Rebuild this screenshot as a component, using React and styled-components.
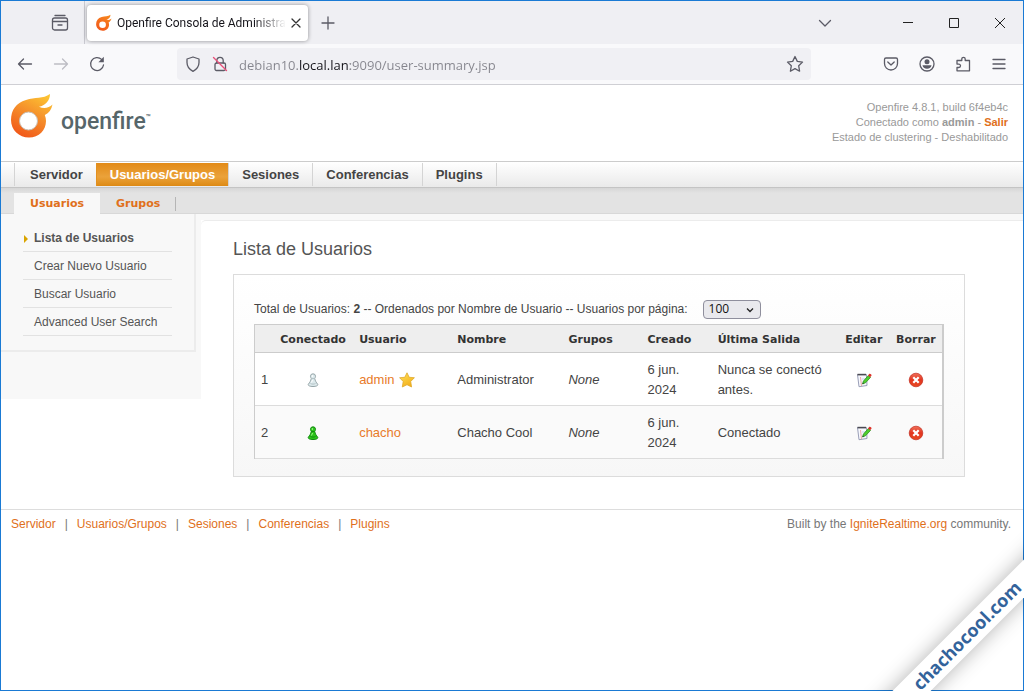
import React from "react";
import styled, { createGlobalStyle } from "styled-components";

const mainTabs = ["Servidor", "Usuarios/Grupos", "Sesiones", "Conferencias", "Plugins"];
const subTabs = ["Usuarios", "Grupos"];
const sideLinks = ["Lista de Usuarios", "Crear Nuevo Usuario", "Buscar Usuario", "Advanced User Search"];
const columns = [
  { title: "", width: 18 },
  { title: "Conectado", width: 80, center: true },
  { title: "Usuario", width: 98 },
  { title: "Nombre", width: 111 },
  { title: "Grupos", width: 79 },
  { title: "Creado", width: 70 },
  { title: "Última Salida", width: 126 },
  { title: "Editar", width: 52, center: true },
  { title: "Borrar", width: 52, center: true },
];
const users = [
  { user: "admin", name: "Administrator", admin: true, online: false, created: "6 jun. 2024", last: "Nunca se conectó antes." },
  { user: "chacho", name: "Chacho Cool", admin: false, online: true, created: "6 jun. 2024", last: "Conectado" },
];

function App() {
  return (
    <Page>
      <GlobalStyle />
      <Window>
        <TabStrip>
          <IconButton aria-label="Firefox View" $w={48}><ViewIcon /></IconButton>
          <StripDivider />
          <Tab>
            <Flame size={17} flat />
            <TabTitle>Openfire Consola de Administra</TabTitle>
            <TabClose aria-label="Cerrar">
              <Line viewBox="0 0 10 10" $size={10}><path d="M1 1l8 8M9 1l-8 8" /></Line>
            </TabClose>
          </Tab>
          <IconButton aria-label="Nueva pestaña" $w={40}>
            <Line viewBox="0 0 14 14" $size={14}><path d="M7 1v12M1 7h12" /></Line>
          </IconButton>
          <Spacer />
          <IconButton aria-label="Listar pestañas" $w={48}>
            <Line viewBox="0 0 14 14" $size={14}><path d="M1.500 4.500L7 10l5.500-5.500" /></Line>
          </IconButton>
          <WindowButtons>
            <IconButton aria-label="Minimizar" $w={46} $dark>
              <Line viewBox="0 0 12 12" $size={12} $thin><path d="M1 5.500h10" /></Line>
            </IconButton>
            <IconButton aria-label="Maximizar" $w={46} $dark>
              <Line viewBox="0 0 12 12" $size={12} $thin><path d="M1.500 1.500h9v9h-9z" /></Line>
            </IconButton>
            <IconButton aria-label="Cerrar ventana" $w={46} $dark>
              <Line viewBox="0 0 12 12" $size={12} $thin><path d="M1 1l10 10M11 1L1 11" /></Line>
            </IconButton>
          </WindowButtons>
        </TabStrip>

        <NavBar>
          <NavGroup>
            <IconButton aria-label="Atrás" $w={36}><ArrowIcon /></IconButton>
            <IconButton aria-label="Adelante" $w={36} disabled><ArrowIcon flip /></IconButton>
            <IconButton aria-label="Recargar" $w={36}><ReloadIcon /></IconButton>
          </NavGroup>
          <UrlBar>
            <ShieldIcon />
            <LockIcon />
            <UrlInput aria-label="Dirección" defaultValue="debian10.local.lan:9090/user-summary.jsp" />
            <IconButton aria-label="Marcador" $w={32}><BookmarkIcon /></IconButton>
          </UrlBar>
          <NavTools>
            <IconButton aria-label="Pocket" $w={36}><PocketIcon /></IconButton>
            <IconButton aria-label="Cuenta" $w={36}><AccountIcon /></IconButton>
            <IconButton aria-label="Extensiones" $w={36}><PuzzleIcon /></IconButton>
            <IconButton aria-label="Menú" $w={36}>
              <Line viewBox="0 0 14 14" $size={14}><path d="M1 2.500h12M1 7h12M1 11.500h12" /></Line>
            </IconButton>
          </NavTools>
        </NavBar>

        <Header>
          <Brand href="#">
            <Flame size={46} />
            <BrandName>openfire<sup>™</sup></BrandName>
          </Brand>
          <Status>
            Openfire 4.8.1, build 6f4eb4c<br />
            Conectado como <b>admin</b> - <a href="#">Salir</a><br />
            Estado de clustering - Deshabilitado
          </Status>
        </Header>

        <MainNav>
          {mainTabs.map((tab) => (
            <MainTab href="#" key={tab} $active={tab === "Usuarios/Grupos"}>{tab}</MainTab>
          ))}
        </MainNav>
        <SubNav>
          {subTabs.map((tab) => (
            <SubTab href="#" key={tab} $active={tab === "Usuarios"}>{tab}</SubTab>
          ))}
        </SubNav>

        <Body>
          <Sidebar>
            <SideBox>
              {sideLinks.map((link, i) => (
                <SideLink href="#" key={link} $active={i === 0}>{link}</SideLink>
              ))}
            </SideBox>
          </Sidebar>
          <Main>
            <Title>Lista de Usuarios</Title>
            <Panel>
              <Summary>
                <label htmlFor="range">
                  Total de Usuarios: <b>2</b> -- Ordenados por Nombre de Usuario -- Usuarios por página:
                </label>
                <SelectWrap>
                  <Select id="range" defaultValue="100">
                    <option>25</option>
                    <option>50</option>
                    <option>100</option>
                  </Select>
                  <Chevron viewBox="0 0 8 8"><path d="M1 2.500l3 3 3-3" /></Chevron>
                </SelectWrap>
              </Summary>
              <Table>
                <colgroup>
                  {columns.map((c) => <col key={c.title} style={{ width: c.width }} />)}
                </colgroup>
                <thead>
                  <tr>
                    {columns.map((c) => <Th key={c.title} $center={c.center}>{c.title}</Th>)}
                  </tr>
                </thead>
                <tbody>
                  {users.map((u, i) => (
                    <Row key={u.user}>
                      <Td>{i + 1}</Td>
                      <Td $center><Pawn online={u.online} /></Td>
                      <Td>
                        <UserCell>
                          <UserLink href="#">{u.user}</UserLink>
                          {u.admin && <StarIcon />}
                        </UserCell>
                      </Td>
                      <Td>{u.name}</Td>
                      <Td><em>None</em></Td>
                      <Td>{u.created}</Td>
                      <Td>{u.last}</Td>
                      <Td $center><IconLink href="#" aria-label={`Editar ${u.user}`}><EditIcon /></IconLink></Td>
                      <Td $center><IconLink href="#" aria-label={`Borrar ${u.user}`}><DeleteIcon /></IconLink></Td>
                    </Row>
                  ))}
                </tbody>
              </Table>
            </Panel>
          </Main>
        </Body>

        <Footer>
          <FooterLinks>
            {mainTabs.map((tab, i) => (
              <React.Fragment key={tab}>
                {i > 0 && <span>|</span>}
                <a href="#">{tab}</a>
              </React.Fragment>
            ))}
          </FooterLinks>
          <div>Built by the <a href="#">IgniteRealtime.org</a> community.</div>
        </Footer>
      </Window>
      <Ribbon>chachocool.com</Ribbon>
    </Page>
  );
}

export default App;

/* icons */

function Flame({ size, flat }) {
  const id = flat ? "flame-s" : "flame-l";
  return (
    <svg width={size} height={size} viewBox="4 4 46 46">
      <defs>
        <linearGradient id={id} x1="0.85" y1="0" x2="0.35" y2="1">
          <stop offset="0" stopColor={flat ? "#f58a1f" : "#fdc733"} />
          <stop offset="0.5" stopColor={flat ? "#f5701c" : "#f58f2b"} />
          <stop offset="1" stopColor="#f15a1a" />
        </linearGradient>
      </defs>
      <path
        fill={`url(#${id})`}
        fillRule="evenodd"
        d="M46 6C39 11 31 9 22 12 12 15 7 22 7 32c0 10 8 17.500 18 17.500S42 42 42 33c0-2-.4-4-1.200-6C45 25 47.500 21.500 48.500 16.500 45 20 40 21 35 18.800c6-1.300 11-5.800 11-12.800zM24.500 24a9 9 0 1 0 .01 18A9 9 0 0 0 24.500 24z"
      />
      {!flat && <circle cx="24.500" cy="33" r="9" fill="none" stroke="#c9bfb4" strokeWidth="1" />}
    </svg>
  );
}

function ViewIcon() {
  return (
    <Line viewBox="0 0 18 18" $size={18}>
      <path d="M4 1.500h10" />
      <rect x="1.500" y="4" width="15" height="12" rx="2" />
      <path d="M1.500 7.500h15M7 11h4" />
    </Line>
  );
}

function ArrowIcon({ flip }) {
  return (
    <Line viewBox="0 0 16 16" $size={16}>
      <path d={flip ? "M1.500 8h13M9.500 3l5 5-5 5" : "M14.500 8h-13M6.500 3l-5 5 5 5"} />
    </Line>
  );
}

function ReloadIcon() {
  return (
    <Line viewBox="0 0 16 16" $size={16}>
      <path d="M12.600 3.400A6.500 6.500 0 1 0 14.500 9" />
      <path d="M14.800 .8v5.400H9.400z" fill="currentColor" stroke="none" />
    </Line>
  );
}

function ShieldIcon() {
  return (
    <Line viewBox="0 0 16 16" $size={16}>
      <path d="M8 1l6 2v3.500c0 4-2.500 7-6 8.800-3.500-1.800-6-4.800-6-8.800V3z" />
    </Line>
  );
}

function LockIcon() {
  return (
    <Line viewBox="0 0 16 16" $size={16}>
      <path d="M4.800 7V4.500a3.200 3.200 0 0 1 6.400 0V7" />
      <rect x="3" y="7" width="10.500" height="7.500" rx="1.500" />
      <path d="M1.500 1.500l13 13" stroke="#e8507a" strokeWidth="1.400" />
    </Line>
  );
}

function BookmarkIcon() {
  return (
    <Line viewBox="0 0 18 18" $size={18}>
      <path d="M9 1.500l2.300 4.900 5.200.7-3.800 3.700.9 5.400L9 13.600l-4.600 2.600.9-5.400L1.500 7.100l5.200-.7z" />
    </Line>
  );
}

function PocketIcon() {
  return (
    <Line viewBox="0 0 16 16" $size={16}>
      <path d="M3 2h10a1.500 1.500 0 0 1 1.500 1.500v4a6.500 6.500 0 0 1-13 0v-4A1.500 1.500 0 0 1 3 2z" />
      <path d="M4.800 6L8 9l3.200-3" />
    </Line>
  );
}

function AccountIcon() {
  return (
    <Line viewBox="0 0 16 16" $size={16}>
      <circle cx="8" cy="8" r="7" />
      <circle cx="8" cy="5.800" r="2.500" fill="currentColor" stroke="none" />
      <path d="M3.500 9.300h9c-.3 2-2 3.500-4.500 3.500s-4.200-1.500-4.500-3.500z" fill="currentColor" stroke="none" />
    </Line>
  );
}

function PuzzleIcon() {
  return (
    <Line viewBox="0 0 16 16" $size={16}>
      <path d="M2 4.500h4.800V3a1.700 1.700 0 0 1 3.400 0v1.500h4.300v10.300H2v-3.300h1.800a1.700 1.700 0 0 0 0-3.400H2z" />
    </Line>
  );
}

function Pawn({ online }) {
  const edge = online ? "#128a10" : "#96a5a8";
  return (
    <svg width="16" height="16" viewBox="0 0 16 16">
      <path
        d="M5.500 4.300a2.500 2.500 0 0 1 5 0c0 1-.4 1.500-.8 2 .5 2.700 1.500 4 3 6 .6 1.500-2 2.200-4.700 2.200s-5.300-.7-4.700-2.200c1.500-2 2.500-3.300 3-6-.4-.5-.8-1-.8-2z"
        fill={online ? "#2cc51b" : "#dce9ec"}
        stroke={edge}
      />
      <path d="M6.500 6.500h3M5.500 11.500c1.500.8 3.500.8 5 0" fill="none" stroke={online ? edge : "#b4c3c6"} />
      <path d="M7.300 3v2M7.500 8L6.500 10.500" stroke={online ? "#a4f58d" : "#fff"} />
    </svg>
  );
}

function StarIcon() {
  return (
    <svg width="16" height="16" viewBox="0 0 16 16">
      <defs>
        <linearGradient id="star" x1="0" y1="0" x2="0.6" y2="1">
          <stop offset="0" stopColor="#ffe25a" />
          <stop offset="1" stopColor="#f3b01c" />
        </linearGradient>
      </defs>
      <path
        d="M8 .8l2.200 4.500 5.200.4-3.700 3.800.9 5.500L8 12.700 3.300 15l.9-5.500L.6 5.700l5.200-.4z"
        fill="url(#star)"
        stroke="#e0a92c"
        strokeWidth="0.800"
        strokeLinejoin="round"
      />
    </svg>
  );
}

function EditIcon() {
  return (
    <svg width="16" height="16" viewBox="0 0 16 16">
      <path d="M1.500 2.500h9l.5 11-8 1.200z" fill="#f7f8fd" stroke="#9a9fb8" />
      <path d="M1.500 2.600h8.500" stroke="#4a4a52" strokeWidth="1.600" />
      <path d="M4.500 5l1 9" stroke="#eda5a5" />
      <path d="M6 7h4M6.500 10h4" stroke="#b9c8e6" strokeWidth="0.800" />
      <path d="M6.500 12l1-3 4.800-5.500 2.200 1.900-5 5.400z" fill="#4fce2c" stroke="#2f9422" strokeWidth="0.800" />
      <path d="M12 3.500l1.100-1.400c1-.9 3 .7 2.300 1.700l-1.300 1.500z" fill="#dc352a" />
      <path d="M6.500 12l.5-1.500 1 .9z" fill="#333" />
    </svg>
  );
}

function DeleteIcon() {
  return (
    <svg width="16" height="16" viewBox="0 0 16 16">
      <defs>
        <linearGradient id="del" x1="0" y1="0" x2="0" y2="1">
          <stop offset="0" stopColor="#f0705a" />
          <stop offset="0.5" stopColor="#e2351f" />
          <stop offset="1" stopColor="#e84a22" />
        </linearGradient>
      </defs>
      <circle cx="8" cy="8" r="6.800" fill="url(#del)" stroke="#c22a1c" strokeWidth="0.700" />
      <path d="M5.300 5.300l5.400 5.400M10.700 5.300l-5.400 5.400" stroke="#fff" strokeWidth="2.200" />
    </svg>
  );
}

/* styles */

const GlobalStyle = createGlobalStyle`
  * {
    box-sizing: border-box;
  }
  body {
    margin: 0;
    background: #fff;
    color: #444;
    font: 12px/20px "Liberation Sans", Arial, sans-serif;
  }
  a {
    color: #e0701b;
    text-decoration: none;
  }
  svg {
    flex: none;
  }
`
const Page = styled.div`
  position: relative;
  overflow: hidden;
`
const Window = styled.div`
  min-height: 100vh;
  border: 1px solid #1a7ad4;
`
const Line = styled.svg`
  width: ${(p) => p.$size}px;
  height: ${(p) => p.$size}px;
  fill: none;
  stroke: currentColor;
  stroke-width: ${(p) => (p.$thin ? 1 : 1.3)};
  stroke-linecap: ${(p) => (p.$thin ? "butt" : "round")};
  stroke-linejoin: ${(p) => (p.$thin ? "miter" : "round")};
`
const IconButton = styled.button`
  display: flex;
  align-items: center;
  justify-content: center;
  width: ${(p) => p.$w}px;
  height: 32px;
  padding: 0;
  border: 0;
  background: none;
  color: ${(p) => (p.$dark ? "#222" : "#5b5b66")};

  &:disabled {
    color: #bdbdc4;
  }
`
const TabStrip = styled.div`
  display: flex;
  align-items: center;
  height: 43px;
  padding-left: 35px;
  background: #efeff3;
`
const StripDivider = styled.div`
  width: 1px;
  height: 100%;
  margin-right: 2px;
  background: #c9c9d0;
`
const Tab = styled.div`
  display: flex;
  align-items: center;
  gap: 5px;
  width: 221px;
  height: 36px;
  padding: 0 8px;
  border-radius: 4px;
  background: #fff;
  box-shadow: 0 0 4px rgba(0, 0, 0, 0.4);
`
const TabTitle = styled.span`
  white-space: nowrap;
  color: #15141a;
  font: 12px/20px Roboto, sans-serif;
  mask-image: linear-gradient(to left, transparent, #000 32px);
`
const TabClose = styled.button`
  display: flex;
  padding: 0;
  border: 0;
  background: none;
  color: #333;
`
const Spacer = styled.div`
  flex: 1;
`
const WindowButtons = styled.div`
  display: flex;
  margin-left: 36px;
`
const NavBar = styled.div`
  display: flex;
  align-items: center;
  height: 41px;
  background: #f9f9fb;
  border-bottom: 1px solid #cfcfd4;
`
const NavGroup = styled.div`
  display: flex;
  width: 176px;
  padding-left: 6px;
`
const UrlBar = styled.div`
  display: flex;
  flex: 1;
  align-items: center;
  gap: 11px;
  height: 32px;
  padding-left: 8px;
  border-radius: 4px;
  background: #f0f0f4;
  color: #5b5b66;
`
const UrlInput = styled.input`
  flex: 1;
  min-width: 0;
  padding: 2px 0 0;
  border: 0;
  outline: 0;
  font: 13px/20px "Open Sans", sans-serif;
  /* only the host is dark, the rest of the address is dimmed */
  background: linear-gradient(to right, #85858d 60px, #15141a 60px, #15141a 111px, #85858d 111px);
  background-clip: text;
  color: transparent;
`
const NavTools = styled.div`
  display: flex;
  padding: 0 6px 0 62px;
`
const Header = styled.header`
  display: flex;
  justify-content: space-between;
  height: 76px;
  padding: 7px 15px 0 7px;
`
const Brand = styled.a`
  display: flex;
  align-items: flex-start;
  gap: 7px;
`
const BrandName = styled.span`
  padding-top: 14px;
  color: #56666a;
  font: 500 23px/32px Roboto, sans-serif;

  sup {
    font-size: 8px;
    line-height: 8px;
  }
`
const Status = styled.div`
  padding-top: 8px;
  color: #999;
  font-size: 11px;
  line-height: 15px;
  text-align: right;

  a {
    font-weight: bold;
  }
`
const MainNav = styled.nav`
  display: flex;
  height: 27px;
  padding: 1px 0 2px 13px;
  border-top: 1px solid #ccc;
  background: linear-gradient(#fff, #e9e9e9);
  box-shadow: inset 0 -1px 0 #c4c4c4;
`
const MainTab = styled.a`
  padding: 0 13px;
  border-left: 1px solid ${(p) => (p.$active ? "#e2901f" : "#d4d4d4")};
  background: ${(p) => (p.$active ? "linear-gradient(#e28a17, #eba23a 60%, #dd8a14)" : "none")};
  color: ${(p) => (p.$active ? "#fff" : "#444")};
  font-size: 13px;
  font-weight: bold;
  line-height: 23px;

  &:first-child {
    padding-left: 15px;
  }
  &:last-child {
    border-right: 1px solid #d4d4d4;
  }
`
const SubNav = styled.nav`
  display: flex;
  height: 26px;
  padding: 5px 0 0 13px;
  background: linear-gradient(#d6d6d6, #e3e3e3 5px);
  box-shadow: inset 0 -1px 0 #d8d8d8;
`
const SubTab = styled.a`
  padding: 0 16px;
  background: ${(p) => (p.$active ? "#f8f8f8" : "linear-gradient(#b5b5b5, #b5b5b5) right center / 1px 14px no-repeat")};
  font: bold 11px/21px "DejaVu Sans", Verdana, sans-serif;
`
const Body = styled.div`
  display: flex;
  align-items: flex-start;
  border-top: 6px solid #f8f8f8;
`
const Sidebar = styled.aside`
  width: 200px;
  margin-top: -6px;
  padding-bottom: 47px;
  background: #f8f8f8;
`
const SideBox = styled.div`
  width: 195px;
  padding: 10px 22px 14px;
  border: solid #ececec;
  border-width: 0 2px 2px 0;
`
const SideLink = styled.a`
  position: relative;
  display: block;
  padding: 4px 0 3px 11px;
  border-bottom: 1px solid #e2e2e2;
  color: #555;
  font-weight: ${(p) => (p.$active ? "bold" : "normal")};

  &::before {
    content: "";
    display: ${(p) => (p.$active ? "block" : "none")};
    position: absolute;
    left: 1px;
    top: 11px;
    border: solid transparent;
    border-width: 4px 0 4px 4px;
    border-left-color: #d9a400;
  }
`
const Main = styled.main`
  flex: 1;
  padding: 15px 58px 32px 32px;
  border-top: 1px solid #ececec;
  border-top-left-radius: 5px;
`
const Title = styled.h1`
  margin: 0 0 12px;
  color: #555;
  font-size: 18px;
  font-weight: normal;
  line-height: 26px;
`
const Panel = styled.section`
  padding: 22px 20px 17px;
  border: 1px solid #dcdcdc;
  background: linear-gradient(#fff, #f7f7f7);
`
const Summary = styled.div`
  display: flex;
  align-items: center;
  gap: 15px;
  height: 24px;
  margin-bottom: 3px;
`
const SelectWrap = styled.div`
  position: relative;
`
const Select = styled.select`
  display: block;
  appearance: none;
  width: 58px;
  height: 19px;
  padding: 0 5px;
  border: 1px solid #8f8f9d;
  border-radius: 4px;
  background: #e9e9ed;
  color: #111;
  font: 12px/16px "Open Sans", sans-serif;
`
const Chevron = styled.svg`
  position: absolute;
  right: 7px;
  top: 6px;
  width: 8px;
  height: 8px;
  fill: none;
  stroke: #222;
  stroke-width: 1.3;
  pointer-events: none;
`
const Table = styled.table`
  width: 100%;
  table-layout: fixed;
  border-spacing: 0;
  border: solid #ccc;
  border-width: 1px 2px 0 1px;
  font-size: 13px;
`
const Th = styled.th`
  height: 28px;
  padding: 2px 6px 0;
  border-bottom: 1px solid #ccc;
  background: #eee;
  color: #333;
  font: bold 11px/20px "DejaVu Sans", Verdana, sans-serif;
  text-align: ${(p) => (p.$center ? "center" : "left")};
  white-space: nowrap;
`
const Row = styled.tr`
  background: #fff;

  &:nth-child(even) {
    background: #fafafa;
  }
`
const Td = styled.td`
  height: 53px;
  padding: 7px 6px 5px;
  border-bottom: 1px solid #dcdcdc;
  text-align: ${(p) => (p.$center ? "center" : "left")};

  svg {
    display: block;
    margin: 0 auto;
  }
`
const UserCell = styled.div`
  display: flex;
  align-items: center;
  gap: 4px;

  svg {
    margin: 0;
  }
`
const UserLink = styled.a`
  color: #e87b2a;
`
const IconLink = styled.a`
  display: block;
`
const Footer = styled.footer`
  display: flex;
  justify-content: space-between;
  padding: 4px 12px 0 10px;
  border-top: 1px solid #ddd;
  color: #777;
`
const FooterLinks = styled.nav`
  display: flex;
  gap: 9px;
`
const Ribbon = styled.div`
  position: absolute;
  right: -63px;
  bottom: 42px;
  width: 240px;
  background: #fff;
  box-shadow: 0 0 20px rgba(0, 0, 0, 0.3);
  color: #33639b;
  font: 700 18px/27px "Open Sans", sans-serif;
  text-align: center;
  transform: rotate(-45deg);
`
